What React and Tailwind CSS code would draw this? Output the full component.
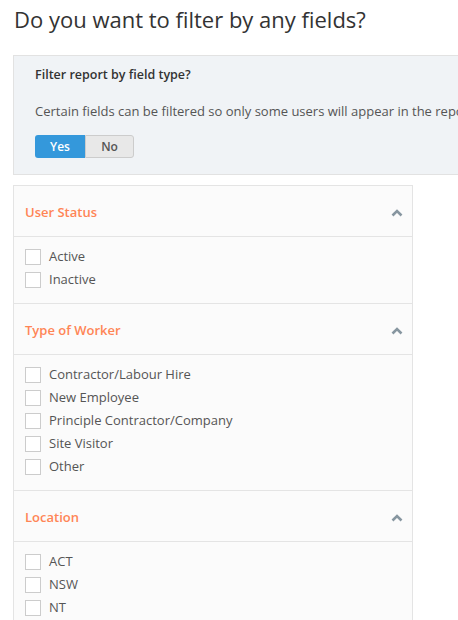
import { useState } from 'react';

const sections = [
  { title: 'User Status', items: ['Active', 'Inactive'] },
  {
    title: 'Type of Worker',
    items: ['Contractor/Labour Hire', 'New Employee', 'Principle Contractor/Company', 'Site Visitor', 'Other'],
  },
  { title: 'Location', items: ['ACT', 'NSW', 'NT', 'QLD', 'SA'] },
];

const Chevron = () => (
  <svg width="12" height="8" viewBox="0 0 12 8" className="text-[#8796a0]">
    <polyline points="1.5,6.5 6,2 10.5,6.5" fill="none" stroke="currentColor" strokeWidth="2.6" />
  </svg>
);

const Section = ({ section, first }) => {
  const [checked, setChecked] = useState({});

  return (
    <div className={first ? '' : 'border-t border-[#e4e4e4]'}>
      <div className="h-[51px] flex items-center justify-between pl-[11px] pr-[9px] pt-[3px] border-b border-[#e4e4e4]">
        <span className="text-[13px] font-semibold text-[#ff8556]">{section.title}</span>
        <Chevron />
      </div>
      <ul className="pl-[11px] pt-[8px] pb-[12px]">
        {section.items.map((item) => (
          <li key={item} className="h-[23px] flex items-center gap-2">
            <button
              onClick={() => setChecked({ ...checked, [item]: !checked[item] })}
              className="w-4 h-4 border border-[#cccccc] bg-white flex items-center justify-center text-[10px] text-[#3498db]"
            >
              {checked[item] ? '✓' : ''}
            </button>
            <span className="text-[13px] text-[#555555]">{item}</span>
          </li>
        ))}
      </ul>
    </div>
  );
};

export default function App() {
  const [filter, setFilter] = useState(true);

  return (
    <div className="w-[458px] h-[620px] overflow-hidden bg-white font-['Open_Sans',sans-serif] pl-[13px]">
      <h1 className="text-[22px] leading-8 mt-[3px] mb-[20px] pl-[1px] text-[#333333] whitespace-nowrap">
        Do you want to filter by any fields?
      </h1>

      <div className="w-[600px] bg-[#f0f3f6] border border-[#e2e2e2] px-[21px] pt-[10px] pb-[16px]">
        <p className="text-[12.5px] leading-[18px] font-semibold text-[#333333]">Filter report by field type?</p>
        <p className="text-[13px] leading-[18px] text-[#555555] mt-[18px] whitespace-nowrap">
          Certain fields can be filtered so only some users will appear in the report.
        </p>
        <div className="flex mt-[15px]">
          <button
            onClick={() => setFilter(true)}
            className={`w-[50px] h-[23px] text-[12px] font-semibold rounded-l-[3px] ${filter ? 'bg-[#3498db] text-white' : 'bg-[#e8e8e8] text-[#555555] border border-[#cccccc]'}`}
          >
            Yes
          </button>
          <button
            onClick={() => setFilter(false)}
            className={`w-[49px] h-[23px] text-[12px] font-semibold rounded-r-[3px] ${!filter ? 'bg-[#3498db] text-white' : 'bg-[#e8e8e8] text-[#555555] border border-[#cccccc]'}`}
          >
            No
          </button>
        </div>
      </div>

      <div className="w-[400px] mt-[10px] border border-[#e4e4e4] bg-[#fbfbfb]">
        {sections.map((s, i) => (
          <Section key={s.title} section={s} first={i === 0} />
        ))}
      </div>
    </div>
  );
}
